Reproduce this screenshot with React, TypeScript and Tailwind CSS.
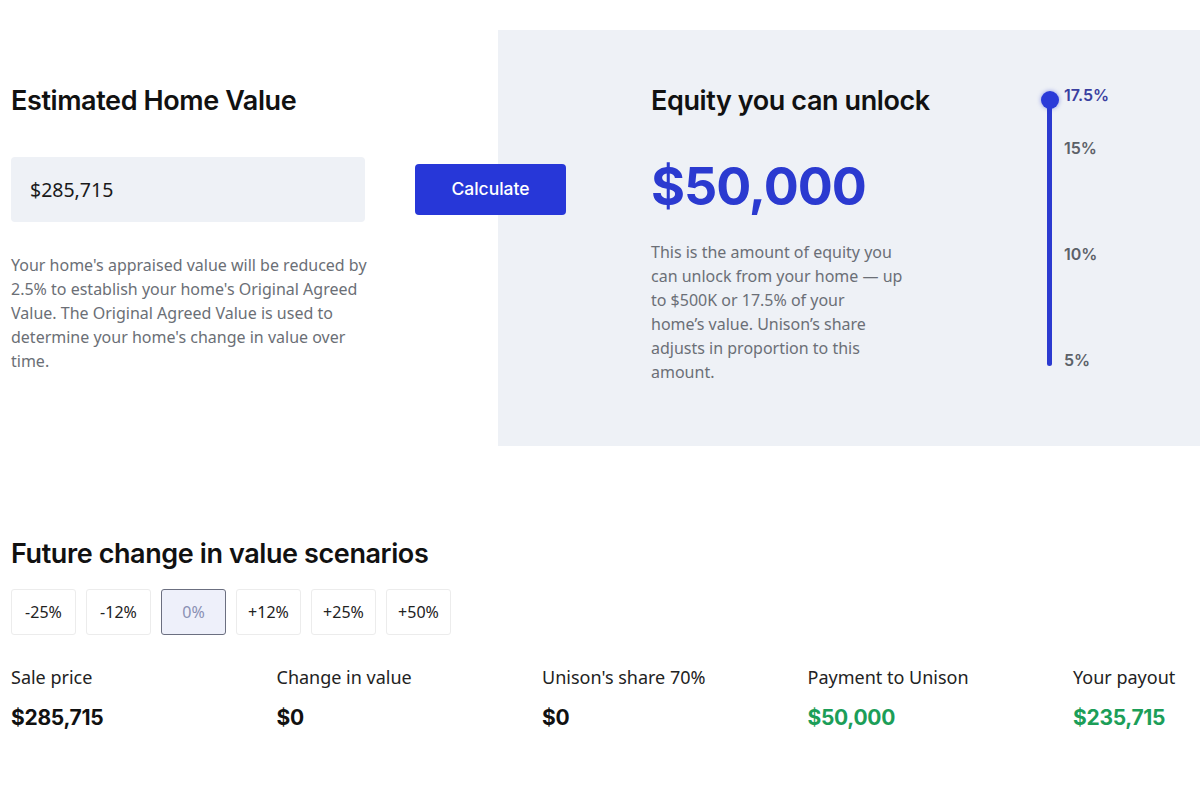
const heading = "font-['Inter',sans-serif] text-[27px] leading-[32px] font-semibold text-[#111] tracking-[-0.4px]";
const body = "font-['Noto_Sans',sans-serif] text-[16px] leading-[24px] text-[#6b6f76]";

const scenarios = ["-25%", "-12%", "0%", "+12%", "+25%", "+50%"];

const results = [
  { label: "Sale price", value: "$285,715", green: false },
  { label: "Change in value", value: "$0", green: false },
  { label: "Unison's share 70%", value: "$0", green: false },
  { label: "Payment to Unison", value: "$50,000", green: true },
  { label: "Your payout", value: "$235,715", green: true },
];

// slider ticks, y offset from the top of the track
const ticks = [
  { label: "17.5%", top: 0, active: true },
  { label: "15%", top: 53, active: false },
  { label: "10%", top: 159, active: false },
  { label: "5%", top: 265, active: false },
];

function EquitySlider() {
  return (
    <div className="relative h-[266px] w-[120px]">
      <div className="absolute left-[6px] top-0 h-[266px] w-[5px] rounded-full bg-[#2b3ad0]" />
      <div className="absolute left-0 top-[-9px] h-[18px] w-[18px] rounded-full bg-[#2a3ad8] shadow-[0_0_4px_rgba(42,58,216,0.5)]" />
      {ticks.map((t) => (
        <span
          key={t.label}
          className={`absolute left-[23px] -translate-y-1/2 font-['Inter',sans-serif] text-[16px] font-semibold ${
            t.active ? "text-[#3a3fa0]" : "text-[#5c6168]"
          }`}
          style={{ top: t.top - 5 }}
        >
          {t.label}
        </span>
      ))}
    </div>
  );
}

export default function App() {
  return (
    <div className="w-[1200px] h-[800px] overflow-hidden bg-white pt-[30px]">
      {/* top: estimate + equity panel */}
      <div className="flex h-[416px]">
        <div className="w-[498px] shrink-0 pl-[11px] pt-[55px]">
          <h2 className={heading}>Estimated Home Value</h2>
          <div className="mt-[40px] flex items-center">
            <div className="flex h-[65px] w-[354px] shrink-0 items-center rounded-[4px] bg-[#eef1f6] pl-[19px] font-['Noto_Sans',sans-serif] text-[19.5px] text-[#1a1a1a]">
              $285,715
            </div>
            <button className="relative z-10 ml-[50px] h-[51px] w-[151px] shrink-0 rounded-[4px] bg-[#2737d8] font-['Inter',sans-serif] text-[17.5px] font-medium text-white">
              Calculate
            </button>
          </div>
          <p className={`${body} mt-[31px] w-[360px]`}>
            Your home's appraised value will be reduced by 2.5% to establish your home's Original Agreed
            Value. The Original Agreed Value is used to determine your home's change in value over time.
          </p>
        </div>

        <div className="flex flex-1 bg-[#eef1f6] pl-[153px]">
          <div className="w-[390px] shrink-0 pt-[55px]">
            <h2 className={heading}>Equity you can unlock</h2>
            <div className="mt-[38px] font-['Inter',sans-serif] text-[52px] leading-[64px] font-bold tracking-[-1px] text-[#2b3ad0]">
              $50,000
            </div>
            <p className={`${body} mt-[21px] w-[270px] whitespace-nowrap`}>
              This is the amount of equity you
              <br />
              can unlock from your home — up
              <br />
              to $500K or 17.5% of your
              <br />
              home’s value. Unison’s share
              <br />
              adjusts in proportion to this
              <br />
              amount.
            </p>
          </div>
          <div className="pt-[70px]">
            <EquitySlider />
          </div>
        </div>
      </div>

      {/* scenarios */}
      <div className="pl-[11px] pt-[92px]">
        <h2 className={heading}>Future change in value scenarios</h2>
        <div className="mt-[19px] flex gap-[10px]">
          {scenarios.map((s) => (
            <button
              key={s}
              className={`h-[46px] w-[65px] rounded-[3px] border font-['Noto_Sans',sans-serif] text-[16px] ${
                s === "0%"
                  ? "border-[#6b6f80] bg-[#eef0fa] text-[#8a90b4]"
                  : "border-[#ececec] bg-white text-[#222]"
              }`}
            >
              {s}
            </button>
          ))}
        </div>
        <div className="mt-[30px] grid grid-cols-[repeat(4,265.5px)_1fr]">
          {results.map((r) => (
            <div key={r.label}>
              <div className="font-['Noto_Sans',sans-serif] text-[18px] leading-[24px] text-[#222]">{r.label}</div>
              <div
                className={`mt-[16px] font-['Inter',sans-serif] text-[21px] leading-[26px] font-bold tracking-[-0.3px] ${
                  r.green ? "text-[#1c9e58]" : "text-[#111]"
                }`}
              >
                {r.value}
              </div>
            </div>
          ))}
        </div>
      </div>
    </div>
  );
}
